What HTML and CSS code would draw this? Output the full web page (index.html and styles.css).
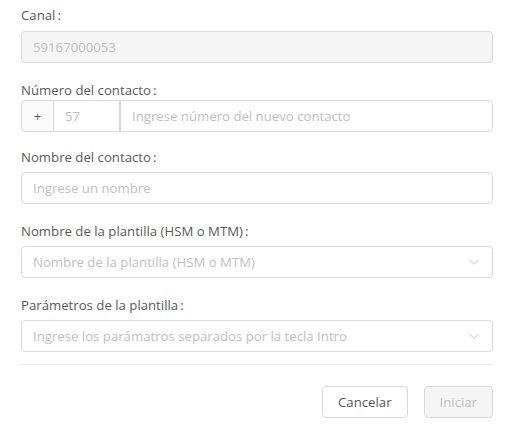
FILE: index.html
```html
<!DOCTYPE html>
<html lang="es">
<head>
<meta charset="utf-8">
<title>Nuevo contacto</title>
<link rel="stylesheet" href="styles.css">
</head>
<body>
<form class="form">
  <div class="item item-first">
    <label class="label">Canal</label>
    <div class="input input-disabled">59167000053</div>
  </div>
  <div class="item item-phone">
    <label class="label">Número del contacto</label>
    <div class="group">
      <span class="addon addon-plus">+</span>
      <span class="addon addon-code">57</span>
      <span class="group-input placeholder">Ingrese número del nuevo contacto</span>
    </div>
  </div>
  <div class="item item-name">
    <label class="label">Nombre del contacto</label>
    <div class="input placeholder">Ingrese un nombre</div>
  </div>
  <div class="item">
    <label class="label">Nombre de la plantilla (HSM o MTM)</label>
    <div class="input select">
      <span class="placeholder">Nombre de la plantilla (HSM o MTM)</span>
      <svg class="arrow" width="12" height="12" viewBox="0 0 12 12"><path d="M1.5 4 L6 8.2 L10.5 4" fill="none" stroke="#c8c8c8" stroke-width="1"/></svg>
    </div>
  </div>
  <div class="item item-last">
    <label class="label">Parámetros de la plantilla</label>
    <div class="input select">
      <span class="placeholder">Ingrese los parámatros separados por la tecla Intro</span>
      <svg class="arrow" width="12" height="12" viewBox="0 0 12 12"><path d="M1.5 4 L6 8.2 L10.5 4" fill="none" stroke="#c8c8c8" stroke-width="1"/></svg>
    </div>
  </div>
  <div class="divider"></div>
  <div class="actions">
    <button type="button" class="btn">Cancelar</button>
    <button type="button" class="btn btn-disabled">Iniciar</button>
  </div>
</form>
</body>
</html>
```
FILE: styles.css
```css
html, body {
  margin: 0;
  padding: 0;
  background: #ffffff;
}
body {
  font-family: "Open Sans", "Noto Sans", sans-serif;
  font-size: 13.2px;
  color: #595959;
}
.form {
  width: 472px;
  padding: 4px 0 0 21px;
  display: flex;
  flex-direction: column;
}
.item {
  display: flex;
  flex-direction: column;
  margin-bottom: 16px;
}
.item-phone { margin-bottom: 14px; }
.item-last { margin-bottom: 12px; }
.label {
  line-height: 22px;
  height: 22px;
  margin-bottom: 4px;
  color: #595959;
}
.label::after {
  content: ":";
  margin: 0 8px 0 2px;
}
.item-first .label { margin-bottom: 5px; }
.item-phone .label { margin-bottom: -1px; }
.input {
  box-sizing: border-box;
  height: 32px;
  border: 1px solid #d9d9d9;
  border-radius: 4px;
  padding: 0 11px;
  display: flex;
  align-items: center;
  line-height: 22px;
  background: #fff;
}
.input-disabled {
  background: #f5f5f5;
  color: #bfbfbf;
}
.placeholder { color: #bfbfbf; }
.select { justify-content: space-between; }
.arrow { flex: none; margin-right: 1px; }
.group {
  display: flex;
  height: 32px;
  box-sizing: border-box;
}
.addon {
  box-sizing: border-box;
  height: 32px;
  border: 1px solid #d9d9d9;
  display: flex;
  align-items: center;
  justify-content: center;
  background: #fafafa;
}
.addon-plus {
  width: 33px;
  border-radius: 4px 0 0 4px;
  color: #595959;
  background: #fafafa;
}
.addon-code {
  width: 66px;
  border-left: 0;
  justify-content: flex-start;
  padding-left: 11px;
  color: #bfbfbf;
  background: #fff;
}
.group-input {
  flex: 1;
  box-sizing: border-box;
  height: 32px;
  border: 1px solid #d9d9d9;
  border-radius: 0 4px 4px 0;
  padding: 0 11px;
  display: flex;
  align-items: center;
}
.divider {
  height: 1px;
  background: #e8e8e8;
}
.actions {
  display: flex;
  justify-content: flex-end;
  gap: 16px;
  margin-top: 21px;
}
.btn {
  font-family: inherit;
  font-size: 13.2px;
  height: 32px;
  box-sizing: border-box;
  padding: 0 15px;
  border: 1px solid #d9d9d9;
  border-radius: 4px;
  background: #fff;
  color: #595959;
}
.btn-disabled {
  background: #f5f5f5;
  color: #bfbfbf;
}
```
